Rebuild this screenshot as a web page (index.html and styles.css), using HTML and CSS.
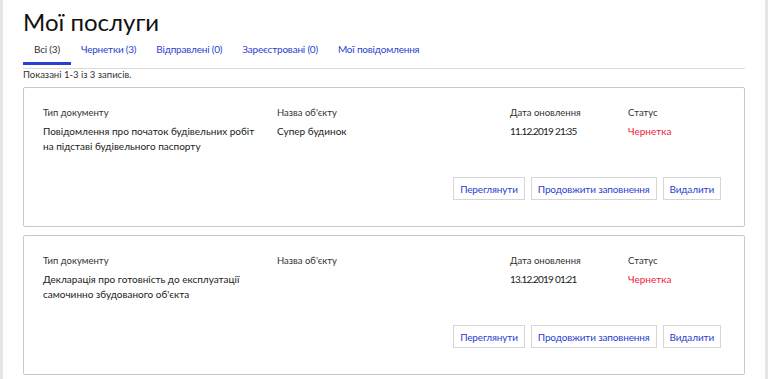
FILE: index.html
```html
<!DOCTYPE html>
<html lang="uk">
  <head>
    <meta charset="UTF-8" />
    <meta name="viewport" content="width=device-width, initial-scale=1.0" />
    <title>Мої послуги</title>
    <link rel="stylesheet" href="styles.css">
  </head>
  <body>
    <main class="page">
      <h1 class="title">Мої послуги</h1>
      <nav class="tabs">
        <a class="tab active">Всі (3)</a>
        <a class="tab">Чернетки (3)</a>
        <a class="tab">Відправлені (0)</a>
        <a class="tab">Зареєстровані (0)</a>
        <a class="tab">Мої повідомлення</a>
      </nav>
      <p class="count">Показані 1-3 із 3 записів.</p>

      <div class="card">
        <div class="row">
          <div class="col type">
            <div class="label">Тип документу</div>
            <div class="value">Повідомлення про початок будівельних робіт на підставі будівельного паспорту</div>
          </div>
          <div class="col name">
            <div class="label">Назва об'єкту</div>
            <div class="value">Супер будинок</div>
          </div>
          <div class="col date">
            <div class="label">Дата оновлення</div>
            <div class="value digits">11.12.2019 21:35</div>
          </div>
          <div class="col status">
            <div class="label">Статус</div>
            <div class="value draft">Чернетка</div>
          </div>
        </div>
        <div class="actions">
          <button class="btn">Переглянути</button>
          <button class="btn">Продовжити заповнення</button>
          <button class="btn">Видалити</button>
        </div>
      </div>

      <div class="card">
        <div class="row">
          <div class="col type">
            <div class="label">Тип документу</div>
            <div class="value">Декларація про готовність до експлуатації самочинно збудованого об'єкта</div>
          </div>
          <div class="col name">
            <div class="label">Назва об'єкту</div>
            <div class="value"></div>
          </div>
          <div class="col date">
            <div class="label">Дата оновлення</div>
            <div class="value digits">13.12.2019 01:21</div>
          </div>
          <div class="col status">
            <div class="label">Статус</div>
            <div class="value draft">Чернетка</div>
          </div>
        </div>
        <div class="actions">
          <button class="btn">Переглянути</button>
          <button class="btn">Продовжити заповнення</button>
          <button class="btn">Видалити</button>
        </div>
      </div>
    </main>
  </body>
</html>
```

FILE: styles.css
```css
body {
  margin: 0;
  background-color: #e4e6e9;
  font-family: Lato, "Noto Sans", sans-serif;
  color: #1e1e1e;
}
.page {
  margin: 0 3px;
  padding: 7px 20px 0 20px;
  background-color: #fff;
  min-height: 100vh;
  box-sizing: border-box;
}
.title {
  margin: 0;
  font-size: 24px;
  font-weight: 400;
  line-height: 30px;
  color: #111;
}
.tabs {
  display: flex;
  flex-flow: row nowrap;
  border-bottom: 1px solid #dadada;
  margin-top: 4px;
  padding-bottom: 3px;
}
.tab {
  padding: 2px 10px 7px 10px;
  font-size: 10px;
  line-height: 12px;
  letter-spacing: -0.2px;
  color: #2b3fce;
  border-bottom: 3px solid transparent;
}
.tab.active {
  color: #333;
  border-bottom-color: #2b3fce;
  padding-left: 11px;
  padding-right: 11px;
}
.count {
  margin: 0 0 6px 0;
  font-size: 9.5px;
  line-height: 12px;
  color: #333;
}
.card {
  border: 1px solid #c9c9c9;
  border-radius: 2px;
  padding: 18px 23px 26px 19px;
  margin-bottom: 8px;
  height: 140px;
  box-sizing: border-box;
  display: flex;
  flex-flow: column nowrap;
  justify-content: space-between;
}
.row {
  display: flex;
  flex-flow: row nowrap;
}
.col {
  font-size: 10px;
}
.type {
  width: 234px;
}
.name {
  width: 233px;
}
.date {
  width: 118px;
}
.label {
  font-size: 9.5px;
  line-height: 14px;
  color: #333;
}
.value {
  margin-top: 4px;
  line-height: 15px;
  color: #1a1a1a;
  padding-right: 20px;
}
.digits {
  letter-spacing: -0.8px;
}
.draft {
  color: #f2213a;
}
.actions {
  display: flex;
  justify-content: flex-end;
  column-gap: 6px;
}
.btn {
  font-family: inherit;
  font-size: 10px;
  letter-spacing: -0.15px;
  color: #2b3fce;
  background-color: #fff;
  border: 1px solid #d6d6d6;
  border-radius: 0;
  height: 23px;
  padding: 0 6px;
}
```
